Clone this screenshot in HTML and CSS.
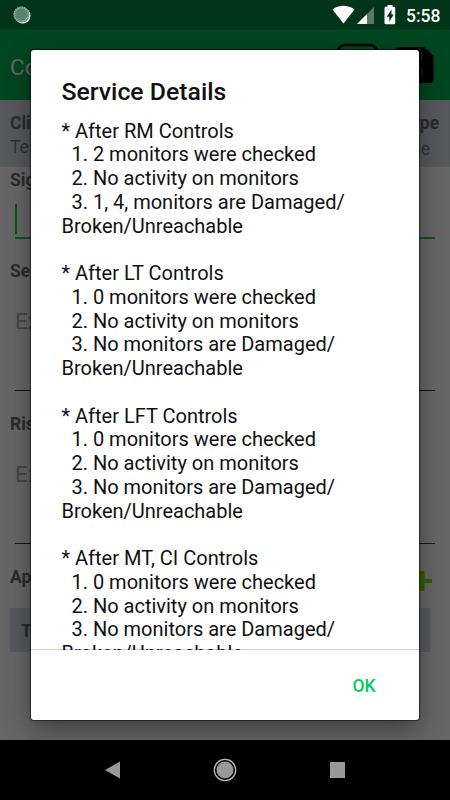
FILE: index.html
```html
<!DOCTYPE html>
<html lang="en">
<head>
<meta charset="utf-8">
<title>Service Details</title>
<link rel="stylesheet" href="styles.css">
</head>
<body>
<div class="screen">
  <header class="status">
    <svg class="sync" width="18" height="18" viewBox="0 0 18 18">
      <circle cx="9.8" cy="9.8" r="7.7" fill="#fff"/>
      <circle cx="8.5" cy="8.5" r="8" fill="#5b826b"/>
      <circle cx="8.5" cy="8.5" r="7" fill="none" stroke="#a5bcae" stroke-width="2" stroke-dasharray="1 1.2"/>
    </svg>
    <svg class="signals" width="66" height="20" viewBox="0 0 66 20">
      <path d="M.5 4.5C7-.4 16-.4 22.500 4.500L11.500 18.500Z" fill="#fff"/>
      <path d="M42 2V19H25Z" fill="#587966"/>
      <path d="M35 9V19H25Z" fill="#fff"/>
      <path d="M55.500 0h5v1.700h1.500q1.200 0 1.200 1.200V18q0 1.200-1.200 1.200H53.700q-1.200 0-1.200-1.200V2.900q0-1.200 1.200-1.200h1.800Z" fill="#fff"/>
      <path d="M59.500 4.500V9.500h2.300l-4.500 7V11.800h-2.600Z" fill="#003519"/>
    </svg>
    <span class="clock">5:58</span>
  </header>
  <div class="toolbar">
    <span class="heading">Co</span>
    <svg class="tools" width="98" height="42" viewBox="0 0 98 42">
      <rect x="2" y="2" width="39" height="38" rx="7" fill="none" stroke="#000" stroke-width="2.500"/>
      <path d="M63 4H88L97.500 13V37q0 3-3 3H63q-3 0-3-3V7q0-3 3-3Z" fill="#000"/>
      <path d="M68 8h17.500v8H68M83 23q4 3 3 8q-1 3-4 4" fill="none" stroke="#003519" stroke-width="1"/>
    </svg>
  </div>
  <div class="client">
    <div><b>Cli</b><span>Tes</span></div>
    <div class="kind"><b>ype</b><span class="value">ne</span></div>
  </div>
  <main class="form">
    <b class="label">Sig</b>
    <div class="field signed"><i class="caret"></i></div>
    <b class="label second">Se</b>
    <div class="field note">Ex</div>
    <b class="label third">Ris</b>
    <div class="field note">Ex</div>
    <div class="add">
      <b class="label">Ap</b>
      <svg width="20" height="20" viewBox="0 0 20 20"><path d="M7.500 0h5v8H20v4H12.500v8h-5v-8H0V8h7.500Z" fill="#345b00"/></svg>
    </div>
    <div class="table"><b>T</b></div>
  </main>
  <nav class="nav">
    <svg width="16" height="18" viewBox="0 0 16 18"><path d="M0 9L15 .5V17.500Z" fill="#999"/></svg>
    <svg width="24" height="24" viewBox="0 0 24 24"><circle cx="12" cy="12" r="10.700" fill="none" stroke="#bbb" stroke-width="1.300"/><circle cx="12" cy="12" r="8.500" fill="#999"/></svg>
    <svg width="15" height="16" viewBox="0 0 15 16"><rect width="15" height="16" rx=".5" fill="#999"/></svg>
  </nav>
  <section class="dialog">
    <h1>Service Details</h1>
    <div class="message">
      <p>* After RM Controls
  1. 2 monitors were checked
  2. No activity on monitors
  3. 1, 4, monitors are Damaged/
Broken/Unreachable</p>
      <p>* After LT Controls
  1. 0 monitors were checked
  2. No activity on monitors
  3. No monitors are Damaged/
Broken/Unreachable</p>
      <p>* After LFT Controls
  1. 0 monitors were checked
  2. No activity on monitors
  3. No monitors are Damaged/
Broken/Unreachable</p>
      <p>* After MT, CI Controls
  1. 0 monitors were checked
  2. No activity on monitors
  3. No monitors are Damaged/
Broken/Unreachable</p>
    </div>
    <footer><button>OK</button></footer>
  </section>
</div>
</body>
</html>
```
FILE: styles.css
```css
* { box-sizing: border-box; }
body { margin: 0; font-family: Roboto, sans-serif; }
svg { display: block; flex: none; }
.screen {
  position: relative;
  width: 450px;
  height: 800px;
  overflow: hidden;
  display: flex;
  flex-direction: column;
  background: #666;
  color: #2a2a2a;
}
.status {
  height: 30px;
  flex: none;
  display: flex;
  align-items: center;
  padding: 0 10px 0 13px;
  background: #003519;
}
.signals { margin-left: auto; }
.clock { margin-left: 8px; width: 34px; font-size: 17.500px; line-height: 30px; font-weight: 500; color: #fff; padding-top: 2px; white-space: nowrap; }
.toolbar {
  height: 70px;
  flex: none;
  display: flex;
  justify-content: space-between;
  padding: 13px 16px 0 10px;
  background: #004620;
}
.heading { font-size: 22.500px; line-height: 48px; color: #666; }
.client {
  height: 67px;
  flex: none;
  display: flex;
  justify-content: space-between;
  padding: 11px 11px 0 10px;
  background: #56585b;
  font-size: 17.500px;
  line-height: 24px;
}
.client b, .client span { display: block; }
.client b, .label, .table b { font-weight: 700; }
.client span { color: #303030; }
.kind { width: 28px; }
.kind .value { width: 19px; margin-top: 2px; text-align: right; }
.kind b { width: 28px; }
.form { height: 573px; flex: none; padding: 1px 15px 0 10px; }
.label { display: block; height: 24px; font-size: 17.500px; line-height: 24px; }
.field { margin-left: 5px; border-bottom: 1px solid #151515; }
.signed { height: 47px; padding-top: 12px; border-bottom: 2px solid #00591f; }
.caret { display: block; width: 2px; height: 30px; background: #00591f; }
.second { margin-top: 20px; }
.note { height: 108px; padding-top: 24px; font-size: 22.500px; line-height: 28px; color: #454545; }
.third { margin-top: 21px; }
.add { display: flex; justify-content: space-between; align-items: center; height: 24px; margin-top: 21px; padding-right: 3px; }
.add svg { margin-top: 8px; }
.table { height: 44px; margin: 19px 5px 0 0; padding-left: 11px; background: #56585b; font-size: 17.500px; line-height: 46px; }
.nav {
  height: 60px;
  flex: none;
  display: grid;
  grid-template-columns: 112px 112px 112px;
  justify-content: center;
  justify-items: center;
  align-items: center;
  background: #000;
  z-index: 2;
}
.dialog {
  position: absolute;
  left: 31px;
  top: 50px;
  width: 388px;
  height: 670px;
  display: flex;
  flex-direction: column;
  border-radius: 3px;
  background: #fff;
  box-shadow: 0 0 1px 1px rgba(0, 0, 0, .5), 0 10px 26px rgba(0, 0, 0, .4);
}
h1 { margin: 0; height: 68px; padding: 26px 30px 0 30.500px; font-size: 24.800px; line-height: 31px; font-weight: 500; color: #111; }
.message { height: 532px; overflow: hidden; padding: 1.700px 30px 0 30.500px; font-size: 20px; line-height: 23.750px; color: #111; }
.message p { margin: 0 0 23.750px; white-space: pre; }
footer { height: 71px; margin-top: -1px; border-top: 1px solid rgba(0, 0, 0, .18); padding: 16px 37px 0 0; display: flex; justify-content: flex-end; }
button { border: 0; padding: 0; width: 36px; height: 41px; background: none; font: 500 17.500px/41px Roboto, sans-serif; color: #00cc5c; text-align: center; }
```
